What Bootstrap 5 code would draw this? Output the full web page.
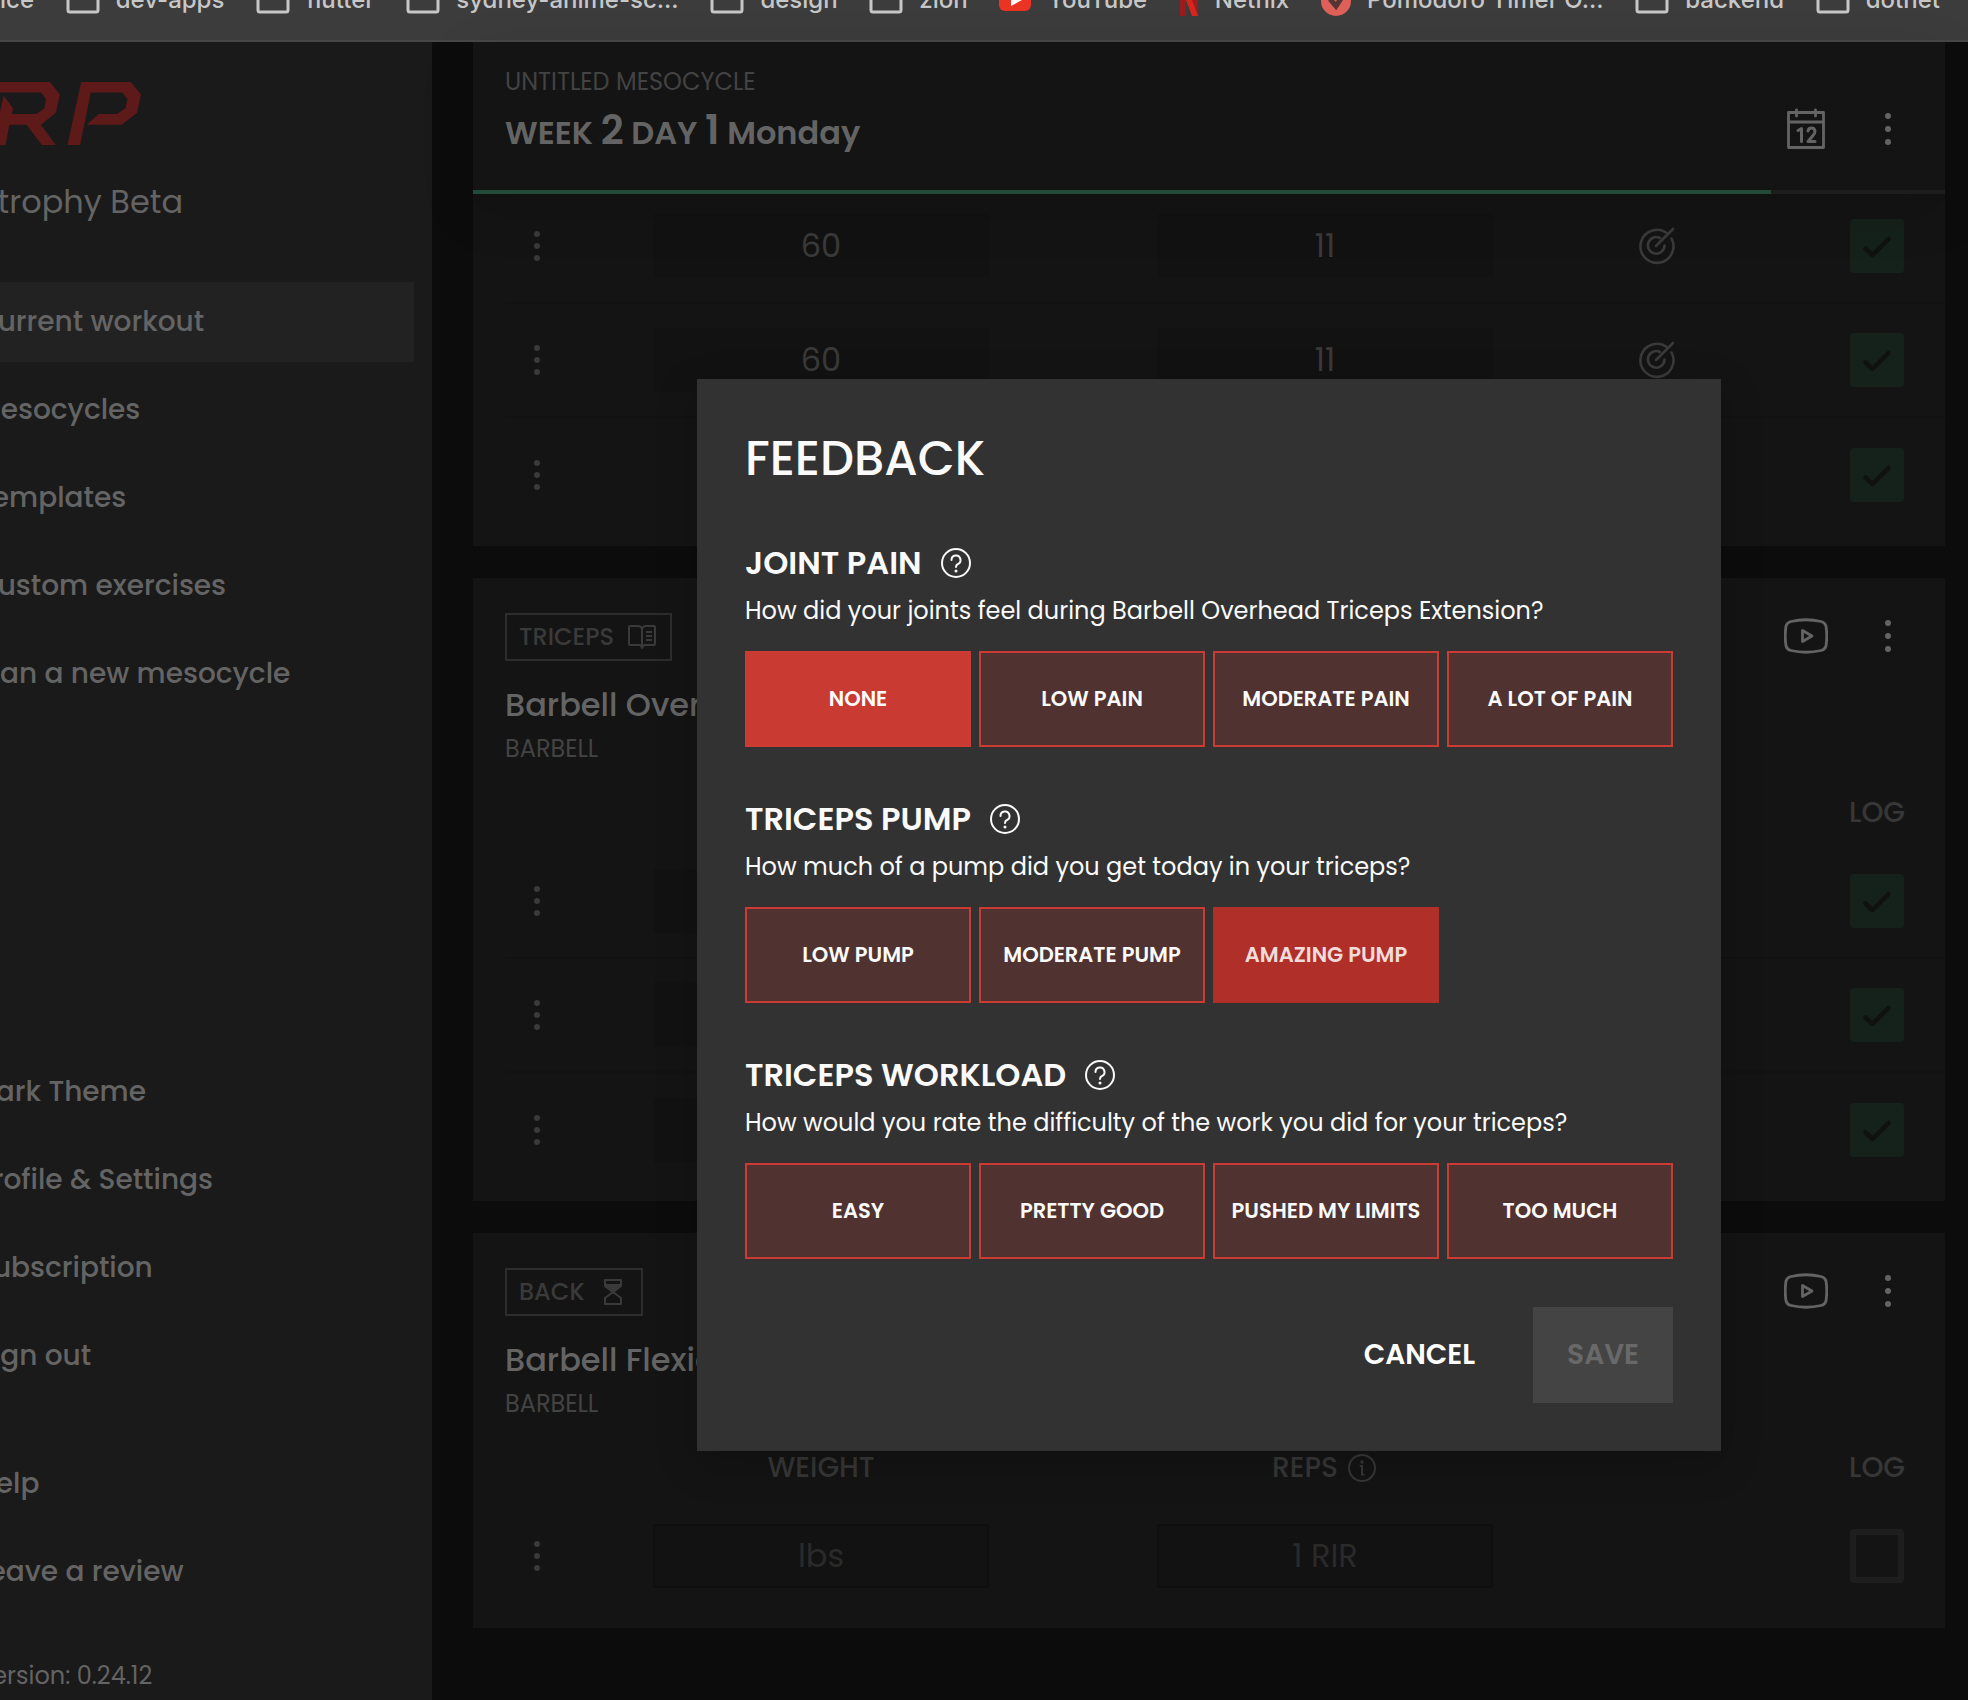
<!DOCTYPE html>
<html lang="en">
<head>
<meta charset="utf-8">
<meta name="viewport" content="width=device-width, initial-scale=1">
<title>RP Hypertrophy Beta</title>
<link rel="stylesheet" href="https://cdn.jsdelivr.net/npm/bootstrap@5.3.0/dist/css/bootstrap.min.css">
<style>
body{background:#0c0c0c;color:#646464;font-family:Poppins,Inter,sans-serif;font-size:24px;line-height:36px;min-height:100vh;overflow-x:hidden}
button{line-height:inherit}
svg{display:block;flex:none}
.bookmarks{height:42px;background:#3c3c3c;border-bottom:2px solid #484848;overflow:hidden;padding-right:28px}
.bookmarks ul{margin-top:-18px;font-family:Inter,sans-serif;font-size:24px;line-height:36px;font-weight:500}
.bookmarks a{color:#c7c7c7;gap:16px}
.shell{min-height:calc(100vh - 42px)}
.sidebar{width:432px;background:#1a1a1a;padding:40px 18px 6px 0;overflow:hidden}
.brand-title{font-size:32px;line-height:48px;margin:33px 0 56px -96px;white-space:nowrap}
.side-nav{gap:8px}
.side-nav .side-item{height:80px;font-size:28px;font-weight:500;color:#646464;white-space:nowrap}
.side-item span,.version{margin-left:-24px}
.side-nav .current{background:#222}
.lower{gap:48px;margin-bottom:46px}
.content-area{padding:0 23px 72px 41px}
.content-area header{position:relative;z-index:1;box-shadow:0 16px 48px rgba(0,0,0,.15)}
.panel{background:#141414;padding-left:32px}
.panel-stack{gap:32px;margin-top:-5px}
.day-head{height:148px;padding:22px 44px 0 32px;background:#141414}
.soft{color:#434343}
.title-lg{font-size:32px;line-height:48px;color:#646464;margin:0}
.day-head .title-lg{margin-top:6px;font-weight:600}
.title-lg b{font-size:40px;font-weight:600}
.day-tools{padding-top:44px;gap:49px}
.meter{height:4px;background:#1d1d1d;border-radius:0}
.meter .progress-bar{background:#234a38}
.icon-btn{background:none;border:0;padding:0;color:#646464}
.ex-head{height:203px;padding:35px 44px 0 0}
.ex-tools{padding-top:5px;gap:47px}
.tagbox{height:48px;border:2px solid #2d2d2d;color:#3a3a3a;font-weight:500;padding:0 14px 0 12px;gap:14px}
.ex-head .title-lg{margin-top:20px;font-weight:500}
.ex-head .soft{margin-top:2px}
.sets{width:100%;table-layout:fixed;margin-bottom:15px}
.sets th{height:63px;font-size:28px;font-weight:500;color:#373737;text-align:center;padding:0}
.sets td{height:114px;padding:0;text-align:center;vertical-align:middle}
.sets tr+tr td{border-top:2px solid #121212}
.c-menu{width:64px}.c-aim{width:160px}.c-log{width:208px}
.sets .last{padding-left:72px}
.sets .icon-btn{display:block;margin:auto;color:#3a3a3a}
.num{display:block;margin:auto;width:66.6%;height:64px;background:#121212;border:2px solid #121212;color:#3a3a3a;text-align:center;font-size:32px;padding:0}
.num:placeholder-shown{border-color:#0f0f0f}
.num::placeholder{color:#2a2a2a;opacity:1}
.tick{appearance:none;display:block;width:54px;height:54px;margin:auto;border:6px solid #1e1e1e;border-radius:4px}
.tick:checked{border:0;background:#15211b url("data:image/svg+xml,%3Csvg xmlns='http://www.w3.org/2000/svg' viewBox='0 0 54 54'%3E%3Cpath d='M15.500 29.500L22.500 36L38.500 20' fill='none' stroke='%23101211' stroke-width='4.500' stroke-linecap='round' stroke-linejoin='round'/%3E%3C/svg%3E")}
.overlay{position:absolute;top:337px;left:41px;right:23px;z-index:5}
.feedback{width:1024px;max-width:100%;background:#323232;color:#fafafa;padding:48px;box-shadow:0 12px 40px rgba(0,0,0,.2)}
.feedback h1{font-size:48px;line-height:64px;font-weight:500;margin:0}
.feedback h2{font-size:32px;line-height:48px;font-weight:600;margin:0}
.feedback section{margin-top:48px}
.q-head{gap:18px}
.q-head .icon-btn{color:#fafafa}
.feedback p{margin:6px 0 22px}
.choices{display:grid;grid-template-columns:repeat(4,1fr);gap:8px}
.choices .btn{height:96px;border:2px solid #cb3a33;border-radius:0;background:#503331;color:#fafafa;font-size:21px;font-weight:600;padding:0;white-space:nowrap}
.choices .chosen{background:#c93a32}
.choices .hovered{background:#b02f29;border-color:#b02f29;color:#f0dcda}
.actions{margin-top:48px;gap:24px}
.actions .btn{height:96px;border:0;border-radius:0;font-size:28px;font-weight:600;color:#fff;padding:0 34px}
.actions .btn:disabled{background:#444;color:#696969;opacity:1}
</style>
<script src="https://cdn.jsdelivr.net/npm/bootstrap@5.3.0/dist/js/bootstrap.bundle.min.js"></script>
</head>
<body>
<svg width="0" height="0" class="position-absolute" aria-hidden="true">
  <symbol id="dots" viewBox="0 0 8 34"><circle cx="4" cy="4" r="3"/><circle cx="4" cy="17" r="3"/><circle cx="4" cy="30" r="3"/></symbol>
  <symbol id="dots-sm" viewBox="0 0 8 32"><circle cx="4" cy="4" r="3"/><circle cx="4" cy="16" r="3"/><circle cx="4" cy="28" r="3"/></symbol>
  <symbol id="folder" viewBox="0 0 34 28"><path d="M2 6a4 4 0 0 1 4-4h7l4 4h11a4 4 0 0 1 4 4v14a2 2 0 0 1-2 2H4a2 2 0 0 1-2-2z" fill="none" stroke="#c7c7c7" stroke-width="3"/></symbol>
  <symbol id="aim" viewBox="0 0 38 38"><g fill="none" stroke="currentColor" stroke-width="2.600" stroke-linecap="round"><path d="M29.600 6.700A16.500 16.500 0 1 0 33.500 11.500"/><path d="M22 11A8.300 8.300 0 1 0 26.500 18.500"/><path d="M18 19L35 2"/></g></symbol>
  <symbol id="video" viewBox="0 0 44 36"><path d="M7 3.500Q22 0 37 3.500Q41 4.500 42 8Q43.500 18 42 28Q41 31.500 37 32.500Q22 36 7 32.500Q3 31.500 2 28Q.5 18 2 8Q3 4.500 7 3.500Z" fill="none" stroke="currentColor" stroke-width="2.800"/><path d="M18.500 12.500v11L28 18z" fill="none" stroke="currentColor" stroke-width="2.800" stroke-linejoin="round"/></symbol>
  <symbol id="help" viewBox="0 0 32 32"><circle cx="16" cy="16" r="14" fill="none" stroke="currentColor" stroke-width="2"/><path d="M11.500 13a4.500 4.500 0 1 1 6.500 4c-1.500.7-2 1.500-2 3" fill="none" stroke="currentColor" stroke-width="2" stroke-linecap="round"/><circle cx="16" cy="24" r="1.500"/></symbol>
</svg>

<nav class="bookmarks" aria-label="Bookmarks">
  <ul class="list-unstyled d-flex justify-content-between mb-0">
    <li><a href="#" class="d-flex align-items-center text-decoration-none">ice</a></li>
    <li><a href="#" class="d-flex align-items-center text-decoration-none"><svg width="34" height="28"><use href="#folder"/></svg>dev-apps</a></li>
    <li><a href="#" class="d-flex align-items-center text-decoration-none"><svg width="34" height="28"><use href="#folder"/></svg>flutter</a></li>
    <li><a href="#" class="d-flex align-items-center text-decoration-none"><svg width="34" height="28"><use href="#folder"/></svg>sydney-anime-sc...</a></li>
    <li><a href="#" class="d-flex align-items-center text-decoration-none"><svg width="34" height="28"><use href="#folder"/></svg>design</a></li>
    <li><a href="#" class="d-flex align-items-center text-decoration-none"><svg width="34" height="28"><use href="#folder"/></svg>zion</a></li>
    <li><a href="#" class="d-flex align-items-center text-decoration-none"><svg width="32" height="24" viewBox="0 0 32 24"><rect width="32" height="23" rx="6" fill="#ea3323"/><path d="M12 6v12l11-6z" fill="#fff"/></svg>YouTube</a></li>
    <li><a href="#" class="d-flex align-items-center text-decoration-none"><svg width="20" height="32" viewBox="0 0 20 32"><path d="M1 0h6v32H1zM13 0h6v32h-6z" fill="#9c1c1c"/><path d="M1 0h6l12 32h-6z" fill="#d8261f"/></svg>Netflix</a></li>
    <li><a href="#" class="d-flex align-items-center text-decoration-none"><svg width="30" height="32" viewBox="0 0 30 32"><circle cx="15" cy="17" r="15" fill="#df6058"/><path d="M9 15l6 7 8-12" fill="none" stroke="#553533" stroke-width="5"/></svg>Pomodoro Timer O...</a></li>
    <li><a href="#" class="d-flex align-items-center text-decoration-none"><svg width="34" height="28"><use href="#folder"/></svg>backend</a></li>
    <li><a href="#" class="d-flex align-items-center text-decoration-none"><svg width="34" height="28"><use href="#folder"/></svg>dotnet</a></li>
  </ul>
</nav>

<div class="shell d-flex">
  <aside class="sidebar d-flex flex-column flex-shrink-0">
    <svg width="141" height="63" viewBox="0 126 424 189" fill="#5e1a19" role="img" aria-label="RP"><path d="M0 126H150L180 163 168 218 123 254 168 315H126L80 254H28L17 315H0V215L11 167 39 205 36 222H110L134 204 138 176 124 157H0Z"/><path d="M244 126H393L424 163 412 218 366 254H261L297 222H352L378 204 383 176 368 157H273L241 315H203Z"/></svg>
    <div class="brand-title">Hypertrophy Beta</div>
    <nav class="side-nav d-flex flex-column" aria-label="Training">
      <a href="#" class="side-item current d-flex align-items-center text-decoration-none" aria-current="page"><span>Current workout</span></a>
      <a href="#" class="side-item d-flex align-items-center text-decoration-none"><span>Mesocycles</span></a>
      <a href="#" class="side-item d-flex align-items-center text-decoration-none"><span>Templates</span></a>
      <a href="#" class="side-item d-flex align-items-center text-decoration-none"><span>Custom exercises</span></a>
      <a href="#" class="side-item d-flex align-items-center text-decoration-none"><span>Plan a new mesocycle</span></a>
    </nav>
    <div class="lower d-flex flex-column mt-auto">
      <nav class="side-nav d-flex flex-column" aria-label="Account">
        <a href="#" class="side-item d-flex align-items-center text-decoration-none"><span>Dark Theme</span></a>
        <a href="#" class="side-item d-flex align-items-center text-decoration-none"><span>Profile &amp; Settings</span></a>
        <a href="#" class="side-item d-flex align-items-center text-decoration-none"><span>Subscription</span></a>
        <a href="#" class="side-item d-flex align-items-center text-decoration-none"><span>Sign out</span></a>
      </nav>
      <nav class="side-nav d-flex flex-column" aria-label="Support">
        <a href="#" class="side-item d-flex align-items-center text-decoration-none"><span>Help</span></a>
        <a href="#" class="side-item d-flex align-items-center text-decoration-none"><span>Leave a review</span></a>
      </nav>
    </div>
    <div class="version">Version: 0.24.12</div>
  </aside>

  <main class="content-area flex-grow-1 position-relative">
    <header>
      <div class="day-head d-flex justify-content-between">
        <div>
          <div class="soft">UNTITLED MESOCYCLE</div>
          <h2 class="title-lg">WEEK <b>2</b> DAY <b>1</b> Monday</h2>
        </div>
        <div class="day-tools d-flex align-items-center align-self-start">
          <button class="icon-btn" type="button" aria-label="Calendar"><svg width="40" height="42" viewBox="0 0 40 42"><g fill="none" stroke="currentColor" stroke-width="2.800" stroke-linecap="round" stroke-linejoin="round"><path d="M2.500 4.500h35v35h-35zM2.500 14h35M10.500 2v6M29.500 2v6"/><path stroke-width="3" d="M12 22.500l3.500-2v13M22 23q.5-3 3.500-3t3.500 3q0 2-2 4.500L22 33.500h7"/></g></svg></button>
          <button class="icon-btn" type="button" aria-label="Workout menu"><svg width="26" height="34" fill="currentColor"><use href="#dots"/></svg></button>
        </div>
      </div>
      <div class="progress meter"><div class="progress-bar" style="width:88.2%"></div></div>
    </header>

    <div class="panel-stack d-flex flex-column">
      <section class="panel overflow-hidden">
        <table class="sets">
          <colgroup><col class="c-menu"><col><col><col class="c-aim"><col class="c-log"></colgroup>
          <tbody>
            <tr><td><button class="icon-btn" type="button" aria-label="Set menu"><svg width="8" height="32" fill="currentColor"><use href="#dots-sm"/></svg></button></td><td><input class="num" aria-label="Weight" value="60"></td><td><input class="num" aria-label="Reps" value="11"></td><td><button class="icon-btn" type="button" aria-label="Target"><svg width="38" height="38"><use href="#aim"/></svg></button></td><td class="last"><input class="tick" type="checkbox" aria-label="Log set" checked></td></tr>
            <tr><td><button class="icon-btn" type="button" aria-label="Set menu"><svg width="8" height="32" fill="currentColor"><use href="#dots-sm"/></svg></button></td><td><input class="num" aria-label="Weight" value="60"></td><td><input class="num" aria-label="Reps" value="11"></td><td><button class="icon-btn" type="button" aria-label="Target"><svg width="38" height="38"><use href="#aim"/></svg></button></td><td class="last"><input class="tick" type="checkbox" aria-label="Log set" checked></td></tr>
            <tr><td><button class="icon-btn" type="button" aria-label="Set menu"><svg width="8" height="32" fill="currentColor"><use href="#dots-sm"/></svg></button></td><td></td><td></td><td></td><td class="last"><input class="tick" type="checkbox" aria-label="Log set" checked></td></tr>
          </tbody>
        </table>
      </section>

      <section class="panel overflow-hidden">
        <div class="ex-head d-flex justify-content-between">
          <div>
            <div class="tagbox d-inline-flex align-items-center">TRICEPS<svg width="28" height="28" viewBox="0 0 28 28" fill="none" stroke="currentColor" stroke-width="2" stroke-linejoin="round"><path d="M14 6Q13 3 10 3H2Q1 3 1 4v17q0 1 1 1h9q2 0 3 3 1-3 3-3h9q1 0 1-1V4q0-1-1-1h-8q-3 0-4 3zv18M18 9h6M18 13h6M18 17h6"/></svg></div>
            <h3 class="title-lg">Barbell Over</h3>
            <div class="soft">BARBELL</div>
          </div>
          <div class="ex-tools d-flex align-items-center align-self-start">
            <button class="icon-btn" type="button" aria-label="Video"><svg width="44" height="36"><use href="#video"/></svg></button>
            <button class="icon-btn" type="button" aria-label="Exercise menu"><svg width="26" height="34" fill="currentColor"><use href="#dots"/></svg></button>
          </div>
        </div>
        <table class="sets">
          <colgroup><col class="c-menu"><col><col><col class="c-aim"><col class="c-log"></colgroup>
          <thead><tr><th></th><th></th><th></th><th></th><th class="last">LOG</th></tr></thead>
          <tbody>
            <tr><td><button class="icon-btn" type="button" aria-label="Set menu"><svg width="8" height="32" fill="currentColor"><use href="#dots-sm"/></svg></button></td><td><input class="num" aria-label="Weight"></td><td></td><td></td><td class="last"><input class="tick" type="checkbox" aria-label="Log set" checked></td></tr>
            <tr><td><button class="icon-btn" type="button" aria-label="Set menu"><svg width="8" height="32" fill="currentColor"><use href="#dots-sm"/></svg></button></td><td><input class="num" aria-label="Weight"></td><td></td><td></td><td class="last"><input class="tick" type="checkbox" aria-label="Log set" checked></td></tr>
            <tr><td><button class="icon-btn" type="button" aria-label="Set menu"><svg width="8" height="32" fill="currentColor"><use href="#dots-sm"/></svg></button></td><td><input class="num" aria-label="Weight"></td><td></td><td></td><td class="last"><input class="tick" type="checkbox" aria-label="Log set" checked></td></tr>
          </tbody>
        </table>
      </section>

      <section class="panel overflow-hidden">
        <div class="ex-head d-flex justify-content-between">
          <div>
            <div class="tagbox d-inline-flex align-items-center">BACK<svg width="28" height="28" viewBox="0 0 28 28" fill="none" stroke="currentColor" stroke-width="2" stroke-linejoin="round"><path d="M6 2h16v6l-8 6-8-6zM6 26h16v-6l-8-6-8 6z"/><path d="M6 7h16v1l-8 6-8-6z" fill="currentColor"/></svg></div>
            <h3 class="title-lg">Barbell Flexio</h3>
            <div class="soft">BARBELL</div>
          </div>
          <div class="ex-tools d-flex align-items-center align-self-start">
            <button class="icon-btn" type="button" aria-label="Video"><svg width="44" height="36"><use href="#video"/></svg></button>
            <button class="icon-btn" type="button" aria-label="Exercise menu"><svg width="26" height="34" fill="currentColor"><use href="#dots"/></svg></button>
          </div>
        </div>
        <table class="sets">
          <colgroup><col class="c-menu"><col><col><col class="c-aim"><col class="c-log"></colgroup>
          <thead><tr><th></th><th>WEIGHT</th><th><span class="d-inline-flex align-items-center gap-2">REPS<svg width="32" height="32" viewBox="0 0 32 32" fill="none" stroke="currentColor" stroke-width="2" stroke-linecap="round"><circle cx="16" cy="16" r="13"/><path d="M14.500 14H16v8.500h1.500"/><circle cx="16" cy="10" r=".7" fill="currentColor"/></svg></span></th><th></th><th class="last">LOG</th></tr></thead>
          <tbody>
            <tr><td><button class="icon-btn" type="button" aria-label="Set menu"><svg width="8" height="32" fill="currentColor"><use href="#dots-sm"/></svg></button></td><td><input class="num" aria-label="Weight" placeholder="lbs"></td><td><input class="num" aria-label="Reps" placeholder="1 RIR"></td><td></td><td class="last"><input class="tick" type="checkbox" aria-label="Log set"></td></tr>
          </tbody>
        </table>
      </section>
    </div>

    <div class="overlay d-flex justify-content-center">
      <div class="feedback" role="dialog" aria-labelledby="fb-title">
        <h1 id="fb-title">FEEDBACK</h1>
        <section>
          <div class="q-head d-flex align-items-center"><h2>JOINT PAIN</h2><button class="icon-btn" type="button" aria-label="About joint pain"><svg width="32" height="32" fill="currentColor"><use href="#help"/></svg></button></div>
          <p>How did your joints feel during Barbell Overhead Triceps Extension?</p>
          <div class="choices">
            <button type="button" class="btn chosen" aria-pressed="true">NONE</button>
            <button type="button" class="btn">LOW PAIN</button>
            <button type="button" class="btn">MODERATE PAIN</button>
            <button type="button" class="btn">A LOT OF PAIN</button>
          </div>
        </section>
        <section>
          <div class="q-head d-flex align-items-center"><h2>TRICEPS PUMP</h2><button class="icon-btn" type="button" aria-label="About pump"><svg width="32" height="32" fill="currentColor"><use href="#help"/></svg></button></div>
          <p>How much of a pump did you get today in your triceps?</p>
          <div class="choices">
            <button type="button" class="btn">LOW PUMP</button>
            <button type="button" class="btn">MODERATE PUMP</button>
            <button type="button" class="btn hovered" aria-pressed="true">AMAZING PUMP</button>
          </div>
        </section>
        <section>
          <div class="q-head d-flex align-items-center"><h2>TRICEPS WORKLOAD</h2><button class="icon-btn" type="button" aria-label="About workload"><svg width="32" height="32" fill="currentColor"><use href="#help"/></svg></button></div>
          <p>How would you rate the difficulty of the work you did for your triceps?</p>
          <div class="choices">
            <button type="button" class="btn">EASY</button>
            <button type="button" class="btn">PRETTY GOOD</button>
            <button type="button" class="btn">PUSHED MY LIMITS</button>
            <button type="button" class="btn">TOO MUCH</button>
          </div>
        </section>
        <div class="actions d-flex justify-content-end">
          <button type="button" class="btn">CANCEL</button>
          <button type="button" class="btn" disabled>SAVE</button>
        </div>
      </div>
    </div>
  </main>
</div>
</body>
</html>
